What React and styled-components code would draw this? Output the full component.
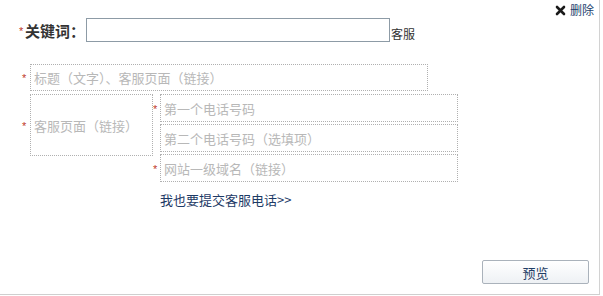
import React from 'react';
import styled, { createGlobalStyle } from 'styled-components';

const GlobalStyle = createGlobalStyle`
	body {
		margin: 0;
		background: #fff;
		font-family: "Liberation Sans", "Noto Sans CJK SC", sans-serif;
	}
	* { box-sizing: border-box; }
`;

const Panel = styled.div`
	width: 600px;
	height: 295px;
	border-right: 1px solid #d2d2d2;
	border-bottom: 1px solid #cfcfcf;
	display: flex;
	flex-direction: column;
`;

const TopBar = styled.div`
	height: 18px;
	display: flex;
	justify-content: flex-end;
	align-items: center;
	padding: 2px 5px 0 0;
`;

const DeleteLink = styled.a`
	display: flex;
	align-items: center;
	gap: 4px;
	font-size: 12px;
	color: #1d3f6e;
	text-decoration: none;
	cursor: pointer;
	line-height: 14px;
	font-family: "Noto Sans CJK SC", sans-serif;
`;

const KeywordRow = styled.div`
	display: flex;
	align-items: center;
	padding-left: 19px;
	height: 24px;
`;

const Star = styled.span`
	color: #c0392b;
	font-size: 11px;
	width: ${p => p.$w || 6}px;
	flex-shrink: 0;
	line-height: 1;
	padding-top: 2px;
`;

const KeyLabel = styled.label`
	width: 61px;
	flex-shrink: 0;
	white-space: nowrap;
	font-size: 15px;
	font-weight: bold;
	color: #333;
	font-family: "Noto Sans CJK SC", sans-serif;
`;

const KeyInput = styled.input`
	width: 304px;
	height: 24px;
	flex-shrink: 0;
	border: 1px solid #8d9ba6;
	padding: 2px 4px;
	font-size: 13px;
	outline: none;
`;

const Suffix = styled.span`
	font-size: 12px;
	color: #333;
	padding-top: 6px;
	padding-left: 1px;
	white-space: nowrap;
	font-family: "Noto Sans CJK SC", sans-serif;
`;

const FieldRow = styled.div`
	display: flex;
	align-items: ${p => p.$align || 'center'};
	padding-left: ${p => p.$indent || 0}px;
	margin-top: ${p => p.$top || 0}px;
`;

const DotInput = styled.input`
	width: ${p => p.$w}px;
	height: ${p => p.$h || 27}px;
	flex-shrink: 0;
	border: 1px dotted #b0b0b0;
	padding: 0 3px;
	font-size: 13px;
	font-family: "Noto Sans CJK SC", sans-serif;
	color: #333;
	outline: none;
	&::placeholder {
		color: #b8b8b8;
	}
`;

const Column = styled.div`
	display: flex;
	flex-direction: column;
	gap: 2px;
`;

const SubmitLink = styled.a`
	margin: 8px 0 0 160px;
	font-size: 13px;
	color: #1d3a66;
	text-decoration: none;
	cursor: pointer;
	font-family: "Noto Sans CJK SC", sans-serif;
`;

const Footer = styled.div`
	margin-top: auto;
	display: flex;
	justify-content: flex-end;
	padding: 0 10px 10px 0;
`;

const PreviewButton = styled.button`
	width: 107px;
	height: 24px;
	border: 1px solid #aab2bb;
	border-radius: 2px;
	background: linear-gradient(#ffffff, #eef1f4);
	color: #1f3d66;
	font-size: 13px;
	font-family: "Noto Sans CJK SC", sans-serif;
	cursor: pointer;
`;

const CrossIcon = () => (
	<svg width="11" height="11" viewBox="0 0 11 11">
		<path d="M2 2 L9 9 M9 2 L2 9" stroke="#1a1a1a" strokeWidth="2.6" strokeLinecap="round" />
	</svg>
);

export default function App() {
	return (
		<>
			<GlobalStyle />
			<Panel>
				<TopBar>
					<DeleteLink><CrossIcon />删除</DeleteLink>
				</TopBar>
				<KeywordRow>
					<Star>*</Star>
					<KeyLabel>关键词：</KeyLabel>
					<KeyInput />
					<Suffix>客服</Suffix>
				</KeywordRow>
				<FieldRow $indent={22} $top={22}>
					<Star $w={8}>*</Star>
					<DotInput $w={398} placeholder="标题（文字）、客服页面（链接）" />
				</FieldRow>
				<FieldRow $indent={22} $top={3} $align="flex-start">
					<FieldRow>
						<Star $w={8}>*</Star>
						<DotInput $w={123} $h={62} placeholder="客服页面（链接）" />
					</FieldRow>
					<Column>
						<FieldRow>
							<Star $w={7}>*</Star>
							<DotInput $w={298} $h={28} placeholder="第一个电话号码" />
						</FieldRow>
						<FieldRow $indent={7}>
							<DotInput $w={298} $h={28} placeholder="第二个电话号码（选填项）" />
						</FieldRow>
						<FieldRow>
							<Star $w={7}>*</Star>
							<DotInput $w={298} $h={28} placeholder="网站一级域名（链接）" />
						</FieldRow>
					</Column>
				</FieldRow>
				<SubmitLink>我也要提交客服电话&gt;&gt;</SubmitLink>
				<Footer>
					<PreviewButton>预览</PreviewButton>
				</Footer>
			</Panel>
		</>
	);
}
